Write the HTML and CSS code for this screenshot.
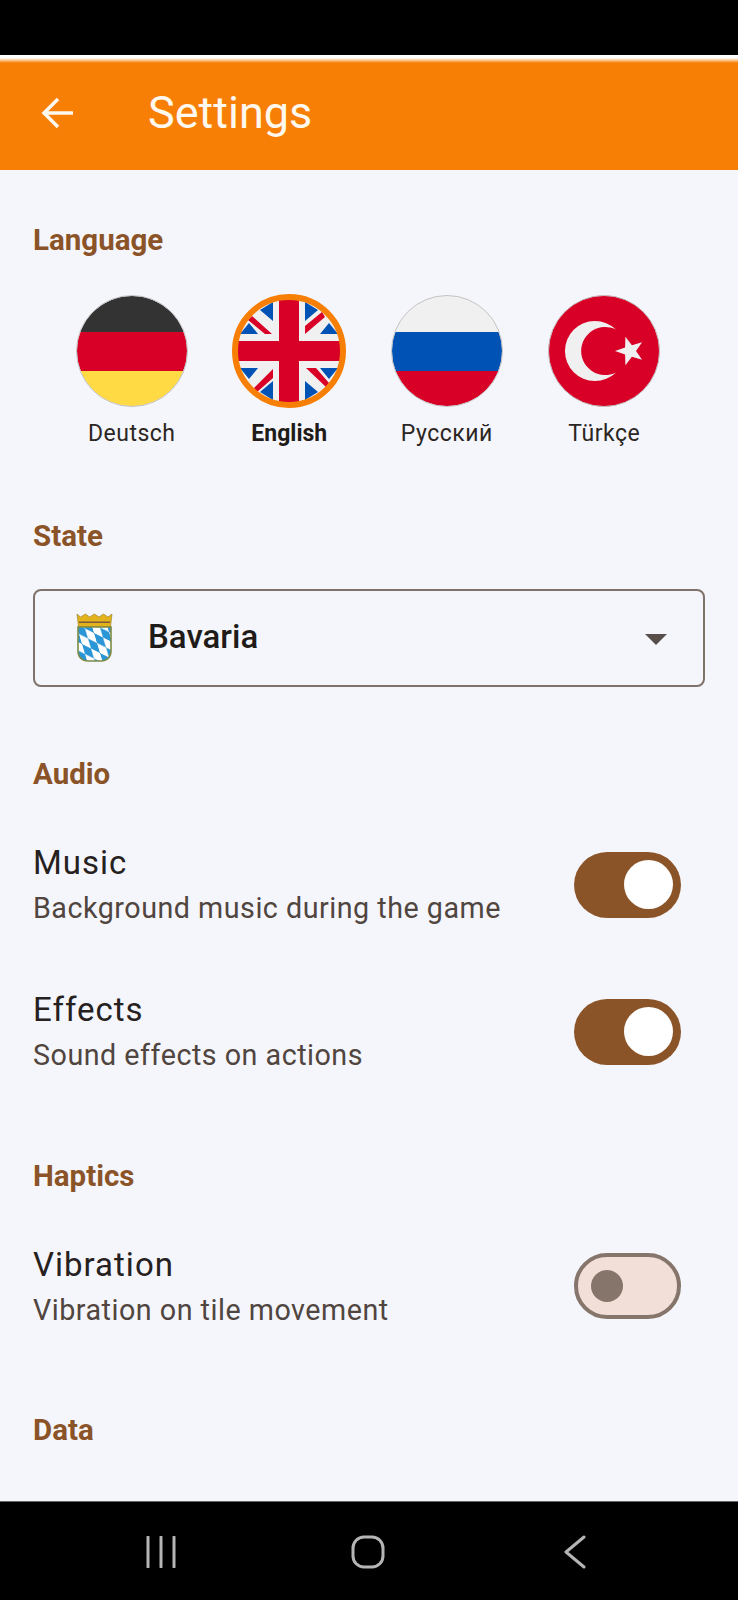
FILE: index.html
```html
<!DOCTYPE html>
<html lang="en">
<head>
<meta charset="UTF-8" />
<meta name="viewport" content="width=device-width, initial-scale=1" />
<title>Settings</title>
<link rel="stylesheet" href="styles.css">
</head>
<body>

<div class="status-bar"></div>

<header class="app-bar">
  <svg class="back-arrow" width="34" height="34" viewBox="0 0 34 34">
    <path d="M32 17H3M17 3L3 17l14 14" />
  </svg>
  <h1>Settings</h1>
</header>

<main class="content">
  <h2 class="section-title first">Language</h2>
  <div class="languages">
    <div class="language">
      <svg class="flag" width="114" height="114" viewBox="-57 -57 114 114">
        <clipPath id="clip-de"><circle r="55" /></clipPath>
        <g clip-path="url(#clip-de)">
          <rect x="-56" y="-56" width="112" height="37" fill="#333333" />
          <rect x="-56" y="-19" width="112" height="39" fill="#d80027" />
          <rect x="-56" y="20" width="112" height="36" fill="#ffda44" />
        </g>
        <circle r="55.5" class="flag-edge" />
      </svg>
      <span class="language-name">Deutsch</span>
    </div>
    <div class="language selected">
      <svg class="flag" width="114" height="114" viewBox="-57 -57 114 114">
        <clipPath id="clip-uk"><circle r="53" /></clipPath>
        <g clip-path="url(#clip-uk)">
          <rect x="-56" y="-56" width="112" height="112" fill="#f0f0f0" />
          <path fill="#0052b4" d="M-16-49v19l-13-11zM16-49v19l13-11zM-16 49V30l-13 11zM16 49V30l13 11zM-49-17h18l-9-11zM49-17H31l9-11zM-49 17h18l-9 11zM49 17H31l9 11z" />
          <path fill="#d80027" d="M-37-35l20 18h-7l-17-14zM16-17l20-17-3-5-17 14zM-35 37l19-19v9l-16 14zM17 17h10l13 15-3 4z" />
          <rect x="-56" y="-10" width="112" height="20" fill="#d80027" />
          <rect x="-10" y="-56" width="20" height="112" fill="#d80027" />
        </g>
        <circle r="54" class="flag-ring" />
      </svg>
      <span class="language-name">English</span>
    </div>
    <div class="language">
      <svg class="flag" width="114" height="114" viewBox="-57 -57 114 114">
        <clipPath id="clip-ru"><circle r="55" /></clipPath>
        <g clip-path="url(#clip-ru)">
          <rect x="-56" y="-56" width="112" height="37" fill="#f0f0f0" />
          <rect x="-56" y="-19" width="112" height="39" fill="#0052b4" />
          <rect x="-56" y="20" width="112" height="36" fill="#d80027" />
        </g>
        <circle r="55.5" class="flag-edge" />
      </svg>
      <span class="language-name">Русский</span>
    </div>
    <div class="language">
      <svg class="flag" width="114" height="114" viewBox="-57 -57 114 114">
        <circle r="55.5" fill="#d80027" />
        <path fill="#f0f0f0" d="M12-21.400A30 30 0 1 0 12 21.400A24 24 0 1 1 12-21.400Z" />
        <polygon fill="#f0f0f0" points="11,0 21.1,-3.5 21.4,-14.3 27.9,-5.7 38.1,-8.8 32,0 38.1,8.8 27.9,5.7 21.4,14.3 21.1,3.5" />
        <circle r="55.5" class="flag-edge" />
      </svg>
      <span class="language-name">Türkçe</span>
    </div>
  </div>

  <h2 class="section-title">State</h2>
  <div class="dropdown">
    <svg class="state-icon" width="37" height="50" viewBox="0 0 37 50">
      <defs>
        <pattern id="lozenges" width="2" height="2" patternUnits="userSpaceOnUse" patternTransform="matrix(9 4.500 3 10 0 11)">
          <rect width="2" height="2" fill="#ffffff" />
          <rect width="1" height="1" fill="#2b96d6" />
          <rect x="1" y="1" width="1" height="1" fill="#2b96d6" />
        </pattern>
      </defs>
      <path fill="#e3b21c" stroke="#8d7a24" stroke-width="0.600" d="M1 1l3.500 3L9.500 1l4 3L18.500 1l4.500 3 4.500-3 4.500 3L36 1l-1.500 13h-32z" />
      <rect x="3" y="8.500" width="31" height="1.500" fill="#7a5a3a" />
      <path fill="url(#lozenges)" stroke="#7d8a45" stroke-width="1.600" d="M2 14h33v24c0 6-4 10-10 10H12C6 48 2 44 2 38z" />
    </svg>
    <span class="dropdown-value">Bavaria</span>
    <span class="dropdown-arrow"></span>
  </div>

  <h2 class="section-title">Audio</h2>
  <div class="setting first-setting">
    <div class="setting-text">
      <div class="setting-name">Music</div>
      <div class="setting-desc">Background music during the game</div>
    </div>
    <div class="toggle on"><span class="knob"></span></div>
  </div>
  <div class="setting next-setting">
    <div class="setting-text">
      <div class="setting-name">Effects</div>
      <div class="setting-desc">Sound effects on actions</div>
    </div>
    <div class="toggle on"><span class="knob"></span></div>
  </div>

  <h2 class="section-title after-settings">Haptics</h2>
  <div class="setting first-setting">
    <div class="setting-text">
      <div class="setting-name">Vibration</div>
      <div class="setting-desc">Vibration on tile movement</div>
    </div>
    <div class="toggle off"><span class="knob"></span></div>
  </div>

  <h2 class="section-title after-settings last">Data</h2>
</main>

<nav class="nav-bar">
  <svg width="30" height="32" viewBox="0 0 30 32">
    <path d="M2 1v30M15 1v30M28 1v30" />
  </svg>
  <svg width="34" height="34" viewBox="0 0 34 34">
    <rect x="2" y="2" width="30" height="30" rx="11" />
  </svg>
  <svg width="22" height="34" viewBox="0 0 22 34">
    <path d="M20 2L2 17l18 15" />
  </svg>
</nav>

</body>
</html>
```

FILE: styles.css
```css
* {
  box-sizing: border-box;
}
body {
  margin: 0;
  height: 1600px;
  overflow: hidden;
  display: flex;
  flex-direction: column;
  font-family: Roboto, Arial, sans-serif;
  background-color: #f5f6fb;
  color: #1f1b18;
}
.status-bar {
  height: 55px;
  background-color: #000;
}
.app-bar {
  height: 115px;
  display: flex;
  align-items: center;
  padding: 1px 0 0 41px;
  background: linear-gradient(#fff 0, #fff 3px, #f77f05 8px);
  color: #fff8ee;
}
.back-arrow {
  fill: none;
  stroke: #fff8ee;
  stroke-width: 3.5;
}
.app-bar h1 {
  margin: 0 0 0 73px;
  font-size: 45px;
  line-height: 50px;
  font-weight: 400;
}
.content {
  flex: 1;
  overflow: hidden;
  padding: 0 33px 0 33px;
}
.section-title {
  margin: 69px 0 0;
  font-size: 29.500px;
  line-height: 36px;
  font-weight: 700;
  color: #8b5428;
}
.section-title.first {
  margin-top: 52px;
}
.section-title.after-settings {
  margin-top: 85px;
}
.section-title.last {
  margin-top: 84px;
}
.languages {
  display: flex;
  margin: 36px 0 0 20px;
}
.language {
  width: 157.500px;
  display: flex;
  flex-direction: column;
  align-items: center;
}
.flag {
  display: block;
}
.flag-edge {
  fill: none;
  stroke: #c4c2c2;
  stroke-width: 1;
}
.flag-ring {
  fill: none;
  stroke: #f77f05;
  stroke-width: 6;
}
.language-name {
  margin-top: 10px;
  font-size: 23px;
  line-height: 31px;
  letter-spacing: 0.500px;
  color: #2b2623;
}
.language.selected .language-name {
  font-weight: 700;
  letter-spacing: 0;
  color: #1f1b18;
}
.dropdown {
  height: 98px;
  margin-top: 35px;
  display: flex;
  align-items: center;
  padding: 0 36px 0 41px;
  border: 2px solid #7f726b;
  border-radius: 8px;
}
.state-icon {
  flex-shrink: 0;
}
.dropdown-value {
  flex: 1;
  margin: 0 0 3px 35px;
  font-size: 33px;
  font-weight: 500;
}
.dropdown-arrow {
  width: 0;
  height: 0;
  border-left: 11px solid transparent;
  border-right: 11px solid transparent;
  border-top: 11px solid #5a504b;
  margin-top: 2px;
}
.setting {
  display: flex;
  align-items: center;
  justify-content: space-between;
  padding-right: 24px;
}
.first-setting {
  margin-top: 51px;
}
.next-setting {
  margin-top: 64px;
}
.setting-name {
  font-size: 33px;
  line-height: 40px;
  letter-spacing: 1px;
  color: #26211e;
}
.setting-desc {
  margin-top: 7px;
  font-size: 28.700px;
  line-height: 36px;
  letter-spacing: 0.500px;
  color: #50453f;
}
.toggle {
  width: 107px;
  height: 66px;
  display: flex;
  align-items: center;
  border-radius: 33px;
}
.toggle.on {
  justify-content: flex-end;
  padding-right: 8px;
  background-color: #8b5428;
}
.toggle.on .knob {
  width: 49px;
  height: 49px;
  background-color: #fff;
}
.toggle.off {
  margin-bottom: 2px;
  padding-left: 13px;
  background-color: #f2e0d8;
  border: 4px solid #85756b;
}
.toggle.off .knob {
  width: 32px;
  height: 32px;
  background-color: #85756b;
}
.knob {
  border-radius: 50%;
}
.nav-bar {
  height: 99px;
  display: flex;
  align-items: center;
  justify-content: space-between;
  padding: 2px 152px 0 146px;
  background-color: #000;
  border-top: 1px solid #666;
}
.nav-bar svg {
  fill: none;
  stroke: #b5b5b5;
  stroke-width: 3;
  stroke-linecap: round;
  stroke-linejoin: round;
}
.nav-bar svg:nth-child(2) {
  margin-left: -4px;
}
```
